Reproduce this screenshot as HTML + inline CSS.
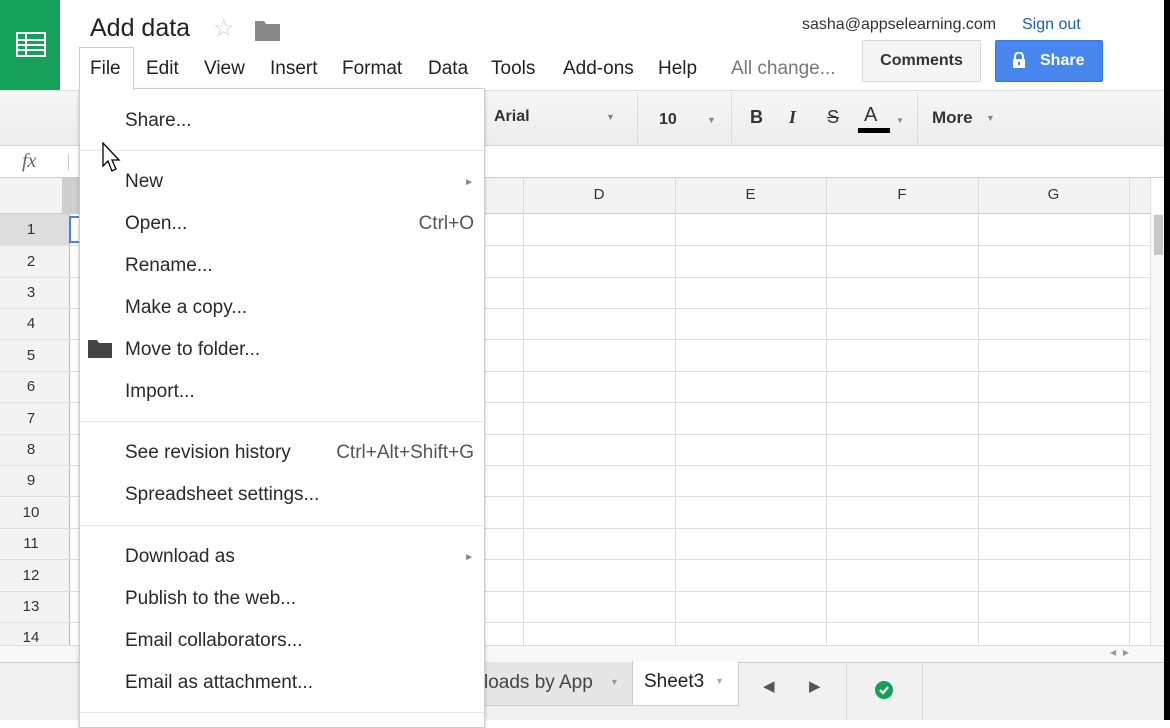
<!DOCTYPE html>
<html><head><meta charset="utf-8"><style>
*{margin:0;padding:0;box-sizing:border-box}
body{width:1170px;height:720px;overflow:hidden;position:relative;background:#fff;font-family:"Liberation Sans",Arial,sans-serif;color:#222}
.a{position:absolute}
.menu span{position:absolute;white-space:nowrap}
.mi{left:45px;font-size:19px;color:#2a2a2a}
.sc{right:10px;font-size:19px;color:#555}
.sep{position:absolute;left:0;right:0;height:1px;background:#e5e5e5}
.col{position:absolute;top:178px;height:467px;width:1px;background:#dcdcdc}
.row{position:absolute;left:0;width:1150px;height:1px;background:#e0e0e0}
.rh{position:absolute;left:0;width:62px;text-align:center;font-size:15px;color:#333}
.ch{position:absolute;top:186px;font-size:15px;color:#333;text-align:center}
.mb{position:absolute;top:58px;font-size:19px;color:#222}
</style></head><body>
<div class="a" style="left:0;top:0;width:60px;height:90px;background:#16a05a"></div>
<svg class="a" style="left:16px;top:32px" width="30" height="25" viewBox="0 0 30 25"><rect x="1" y="1" width="28" height="23" fill="none" stroke="#fff" stroke-width="2"/><path d="M1 8H29M1 13H29M1 18H29M10 1V24" stroke="#fff" stroke-width="2"/></svg>
<div class="a" style="left:90px;top:14px;font-size:25px;color:#222">Add data</div>
<div class="a" style="left:213px;top:14px;font-size:24px;color:#ccc">☆</div>
<svg class="a" style="left:255px;top:19px" width="25" height="22"><path d="M0 2H9L11 5H25V22H0Z" fill="#888"/></svg>
<div class="a" style="left:802px;top:16px;font-size:16px;color:#333">sasha@appselearning.com</div>
<div class="a" style="left:1022px;top:16px;font-size:16px;color:#1a5fb4">Sign out</div>
<div class="a" style="left:862px;top:40px;width:119px;height:42px;border:1px solid #d8d8d8;border-radius:2px;background:#f5f5f5;font-size:16px;font-weight:bold;text-align:center;line-height:40px;color:#333">Comments</div>
<div class="a" style="left:995px;top:40px;width:108px;height:42px;border-radius:2px;background:#4787ed;border:1px solid #3079ed;font-size:16px;font-weight:bold;color:#fff;line-height:40px;padding-left:44px">Share</div>
<svg class="a" style="left:1012px;top:52px" width="14" height="16"><path d="M3 7V4.5a4 4 0 0 1 8 0V7" fill="none" stroke="#fff" stroke-width="2"/><rect x="1" y="7" width="12" height="9" fill="#fff"/><rect x="6" y="10" width="2" height="3" fill="#4787ed"/></svg>
<div class="mb" style="left:146px">Edit</div>
<div class="mb" style="left:204px">View</div>
<div class="mb" style="left:270px">Insert</div>
<div class="mb" style="left:342px">Format</div>
<div class="mb" style="left:428px">Data</div>
<div class="mb" style="left:491px">Tools</div>
<div class="mb" style="left:563px">Add-ons</div>
<div class="mb" style="left:658px">Help</div>
<div class="mb" style="left:731px;color:#777">All change...</div>
<div class="a" style="left:0;top:90px;width:1170px;height:56px;background:linear-gradient(#f6f6f6,#ededed);border-top:1px solid #ddd;border-bottom:1px solid #d6d6d6"></div>
<div class="a" style="left:637px;top:92px;width:1px;height:52px;background:#ddd"></div>
<div class="a" style="left:731px;top:92px;width:1px;height:52px;background:#ddd"></div>
<div class="a" style="left:917px;top:92px;width:1px;height:52px;background:#ddd"></div>
<div class="a" style="left:494px;top:108px;font-size:16px;font-weight:bold;color:#333">Arial</div>
<div class="a" style="left:606px;top:112px;font-size:9px;color:#888">▼</div>
<div class="a" style="left:659px;top:111px;font-size:16px;font-weight:bold;color:#333">10</div>
<div class="a" style="left:707px;top:115px;font-size:9px;color:#888">▼</div>
<div class="a" style="left:750px;top:107px;font-size:18px;font-weight:bold;color:#333">B</div>
<div class="a" style="left:789px;top:107px;font-size:18px;font-style:italic;font-family:'Liberation Serif',serif;font-weight:bold;color:#333">I</div>
<div class="a" style="left:827px;top:107px;font-size:18px;color:#333;text-decoration:line-through">S</div>
<div class="a" style="left:864px;top:104px;font-size:20px;color:#333">A</div>
<div class="a" style="left:858px;top:128px;width:32px;height:5px;background:#000"></div>
<div class="a" style="left:896px;top:116px;font-size:8px;color:#888">▼</div>
<div class="a" style="left:932px;top:108px;font-size:17px;font-weight:bold;color:#333">More</div>
<div class="a" style="left:986px;top:113px;font-size:9px;color:#888">▼</div>
<div class="a" style="left:22px;top:150px;font-size:20px;font-style:italic;font-family:'Liberation Serif',serif;color:#666">fx</div>
<div class="a" style="left:68px;top:154px;width:1px;height:16px;background:#ccc"></div>
<div class="a" style="left:0;top:177px;width:1170px;height:1px;background:#ccc"></div>
<div class="a" style="left:0;top:178px;width:1150px;height:36px;background:#f3f3f3;border-bottom:1px solid #ccc"></div>
<div class="a" style="left:0;top:214px;width:69px;height:431px;background:#f3f3f3"></div>
<div class="a" style="left:0;top:214px;width:69px;height:31px;background:#ddd"></div>
<div class="a" style="left:62px;top:178px;width:17px;height:36px;background:#cfcfcf"></div>
<div class="a" style="left:69px;top:214px;width:10px;height:431px;background:#fff;border-left:1px solid #bbb"></div>
<div class="a" style="left:69px;top:216px;width:10px;height:27px;border:2px solid #4a7ee0;border-right:none"></div>
<div class="col" style="left:523px"></div><div class="col" style="left:675px"></div><div class="col" style="left:826px"></div><div class="col" style="left:978px"></div><div class="col" style="left:1129px"></div><div class="col" style="left:1150px"></div>
<div class="ch" style="left:523px;width:152px">D</div><div class="ch" style="left:675px;width:151px">E</div><div class="ch" style="left:826px;width:152px">F</div><div class="ch" style="left:978px;width:151px">G</div>
<div class="row" style="top:245px"></div><div class="row" style="top:277px"></div><div class="row" style="top:308px"></div><div class="row" style="top:339px"></div><div class="row" style="top:371px"></div><div class="row" style="top:402px"></div><div class="row" style="top:434px"></div><div class="row" style="top:465px"></div><div class="row" style="top:496px"></div><div class="row" style="top:528px"></div><div class="row" style="top:559px"></div><div class="row" style="top:591px"></div><div class="row" style="top:622px"></div>
<div class="rh" style="top:221px">1</div><div class="rh" style="top:253px">2</div><div class="rh" style="top:284px">3</div><div class="rh" style="top:315px">4</div><div class="rh" style="top:347px">5</div><div class="rh" style="top:378px">6</div><div class="rh" style="top:410px">7</div><div class="rh" style="top:441px">8</div><div class="rh" style="top:472px">9</div><div class="rh" style="top:504px">10</div><div class="rh" style="top:535px">11</div><div class="rh" style="top:567px">12</div><div class="rh" style="top:598px">13</div><div class="rh" style="top:629px">14</div>
<div class="a" style="left:1151px;top:214px;width:13px;height:448px;background:#f8f8f8"></div>
<div class="a" style="left:1154px;top:215px;width:9px;height:40px;background:#c8c8c8"></div>
<div class="a" style="left:1164px;top:0;width:6px;height:720px;background:#000"></div>
<div class="a" style="left:0;top:645px;width:1164px;height:17px;background:#f8f8f8;border-top:1px solid #ddd"></div>
<div class="a" style="left:1110px;top:648px;font-size:8px;color:#999">◀ &nbsp; ▶</div>
<div class="a" style="left:0;top:662px;width:1164px;height:58px;background:#f1f1f1;border-top:1px solid #ccc"></div>
<div class="a" style="left:484px;top:662px;width:148px;height:44px;background:#e6e6e6;border-bottom:1px solid #ccc"></div>
<div class="a" style="left:484px;top:672px;font-size:19px;color:#444">loads by App</div>
<div class="a" style="left:610px;top:677px;font-size:9px;color:#999">▼</div>
<div class="a" style="left:632px;top:661px;width:107px;height:45px;background:#fff;border:1px solid #ccc;border-top:none"></div>
<div class="a" style="left:644px;top:671px;font-size:19px;color:#222">Sheet3</div>
<div class="a" style="left:715px;top:676px;font-size:9px;color:#aaa">▼</div>
<div class="a" style="left:763px;top:677px;font-size:15px;color:#555">◀</div>
<div class="a" style="left:809px;top:677px;font-size:15px;color:#555">▶</div>
<div class="a" style="left:846px;top:662px;width:1px;height:58px;background:#ddd"></div>
<div class="a" style="left:922px;top:662px;width:1px;height:58px;background:#ddd"></div>
<svg class="a" style="left:875px;top:681px" width="18" height="18"><circle cx="9" cy="9" r="9" fill="#16a05a"/><path d="M5 9L8 12L13 6" fill="none" stroke="#fff" stroke-width="2.2"/></svg>
<div class="a" style="left:79px;top:47px;width:55px;height:43px;background:#fff;border:1px solid #ccc;border-bottom:none;z-index:3"></div>
<div class="a" style="left:90px;top:58px;font-size:19px;color:#222;z-index:4">File</div>
<div class="a menu" style="left:79px;top:88px;width:406px;height:640px;background:#fff;border:1px solid #ccc;box-shadow:0 2px 4px rgba(0,0,0,.2);z-index:2">
<span class="mi" style="top:21px">Share...</span>
<div class="sep" style="top:61px"></div>
<span class="mi" style="top:82px">New</span><span style="right:10px;top:88px;font-size:10px;color:#888">►</span>
<span class="mi" style="top:124px">Open...</span><span class="sc" style="top:124px">Ctrl+O</span>
<span class="mi" style="top:166px">Rename...</span>
<span class="mi" style="top:208px">Make a copy...</span>
<svg style="position:absolute;left:8px;top:251px" width="24" height="18"><path d="M0 0H9L11 3H24V18H0Z" fill="#444"/></svg>
<span class="mi" style="top:250px">Move to folder...</span>
<span class="mi" style="top:292px">Import...</span>
<div class="sep" style="top:332px"></div>
<span class="mi" style="top:353px">See revision history</span><span class="sc" style="top:353px">Ctrl+Alt+Shift+G</span>
<span class="mi" style="top:395px">Spreadsheet settings...</span>
<div class="sep" style="top:436px"></div>
<span class="mi" style="top:457px">Download as</span><span style="right:10px;top:463px;font-size:10px;color:#888">►</span>
<span class="mi" style="top:499px">Publish to the web...</span>
<span class="mi" style="top:541px">Email collaborators...</span>
<span class="mi" style="top:583px">Email as attachment...</span>
<div class="sep" style="top:623px"></div>
</div>
<svg class="a" style="left:102px;top:142px;z-index:5" width="20" height="32"><path d="M1 1V24L6 19L10 29L14 27L10 18H17Z" fill="#fff" stroke="#000" stroke-width="1.3"/></svg>
</body></html>
